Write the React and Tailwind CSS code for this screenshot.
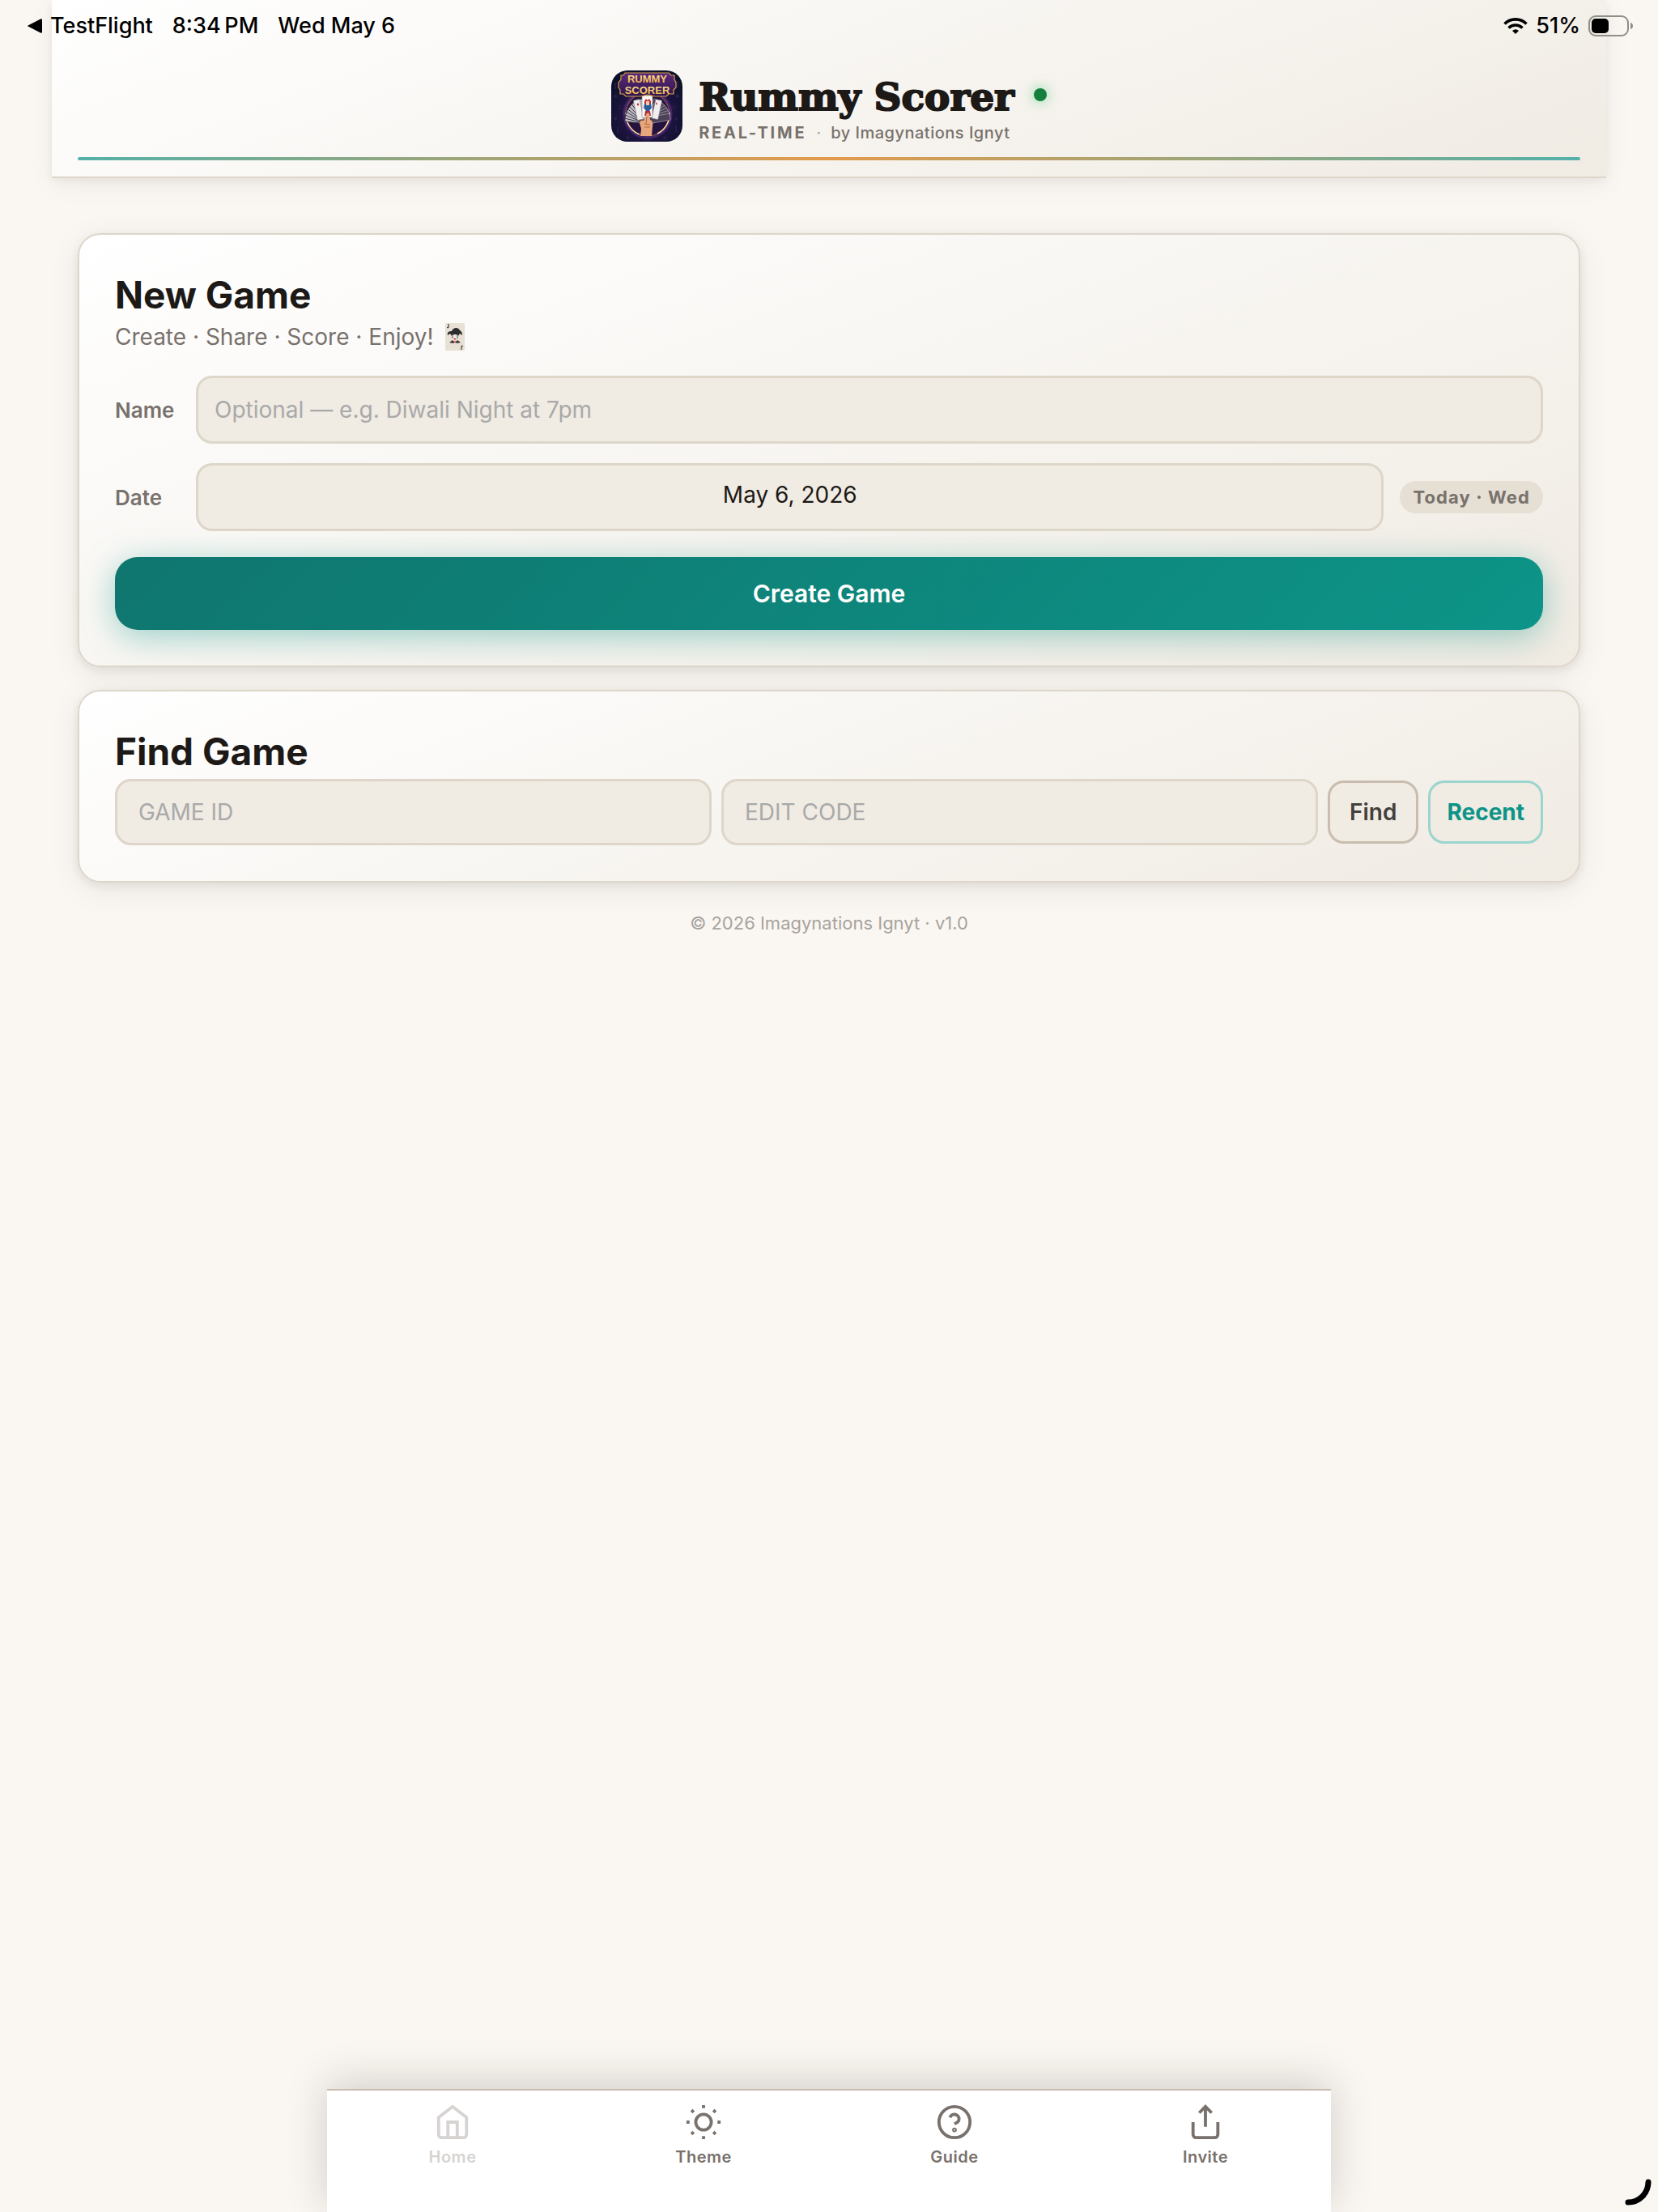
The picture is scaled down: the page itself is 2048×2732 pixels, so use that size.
import React, { useState } from "react";

const fieldClass =
    "min-w-0 rounded-[20px] border-3 border-[#ddd6c9] bg-[#f0ebe3] text-[28px] leading-8 text-[#1c1917] placeholder:text-[#a9a9a9] outline-none";

const cardClass =
    "rounded-[28px] border-2 border-[#ddd6c9] bg-[linear-gradient(160deg,#ffffff_0%,#f0ebe3_100%)] p-11 shadow-[0_4px_12px_rgba(28,25,23,0.08),0_8px_40px_rgba(28,25,23,0.07)]";

const cards = [-84, -76, -68, -60, -52, -44, -36, -28, -20];
const darkCards = [24, 32, 40, 48, 56, 64, 72, 80];

const AppLogo = () => (
    <svg viewBox="0 0 88 88" className="size-[88px] shrink-0 rounded-[20px]" role="img" aria-label="Rummy Scorer logo">
        <defs>
            <radialGradient id="logoBg" cx="50%" cy="62%" r="65%">
                <stop offset="0" stopColor="#4a2672" />
                <stop offset="0.55" stopColor="#1d1440" />
                <stop offset="1" stopColor="#0b1128" />
            </radialGradient>
            <linearGradient id="gold" x1="0" y1="0" x2="0" y2="1">
                <stop offset="0" stopColor="#fff0a0" />
                <stop offset="1" stopColor="#eaa93a" />
            </linearGradient>
            <linearGradient id="plate" x1="0" y1="0" x2="0" y2="1">
                <stop offset="0" stopColor="#5b2a78" />
                <stop offset="1" stopColor="#2d1450" />
            </linearGradient>
        </defs>
        <rect width="88" height="88" fill="url(#logoBg)" />
        <g fill="#2c2148" fontSize="8" fontFamily="Liberation Sans, sans-serif">
            <text x="3" y="34">♠</text>
            <text x="79" y="34">♣</text>
            <text x="8" y="48">20</text>
            <text x="72" y="48">30</text>
            <text x="3" y="62">♥</text>
            <text x="78" y="62">♦</text>
            <text x="18" y="86">♥</text>
            <text x="40" y="87">80</text>
            <text x="64" y="86">♥</text>
        </g>
        <path d="M5 15v8M82 13v8M8 70v8M80 68v8" stroke="#2a2148" strokeWidth="1.5" />
        <circle cx="45" cy="54" r="29" fill="none" stroke="#43256c" strokeWidth="3" />
        <circle cx="45" cy="54" r="27" fill="#24123f" stroke="#8f5a4f" strokeWidth="1.200" />
        <path d="M18 52a27 27 0 0 0 17 27M72 52a27 27 0 0 1-15 26" fill="none" stroke="#ffdfa0" strokeWidth="1.500" />
        {cards.map((angle) => (
            <rect key={angle} x="41" y="34" width="8" height="27" rx="1" fill="#c3bfc8" stroke="#2f2a38" strokeWidth="0.900" transform={`rotate(${angle} 45 62)`} />
        ))}
        {darkCards.map((angle) => (
            <rect key={angle} x="41" y="34" width="8" height="27" rx="1" fill="#4b4259" stroke="#a79ca9" strokeWidth="0.700" transform={`rotate(${angle} 45 62)`} />
        ))}
        <rect x="33" y="34" width="8" height="25" rx="1" fill="#f1eef0" stroke="#77717c" strokeWidth="0.600" transform="rotate(-12 45 63)" />
        <rect x="49" y="34" width="8" height="24" rx="1" fill="#f1eef0" stroke="#77717c" strokeWidth="0.600" transform="rotate(12 45 63)" />
        <rect x="38" y="31" width="13" height="27" rx="1" fill="#fdfbf7" stroke="#77717c" strokeWidth="0.600" />
        <path d="M41 38l2-3 2 2 2-2 2 3v3h-8z" fill="#c42e35" />
        <path d="M41 41h8l1 5-3 4h-4l-3-4z" fill="#2d5b9c" />
        <path d="M43 38h4v5h-4z" fill="#f1c8a2" />
        <path d="M42 50h6l1 6h-8z" fill="#ad3040" />
        <path d="M33 40l1.500 2-1.500 2-1.500-2zM56 39l1 2-1 2-1-2z" fill="#c42e35" />
        <path d="M36 81l1-9-2-7c0-3 3-4 5-3l3-7c1-3 3-3 4-1l1 7c3 1 4 4 3 8l-1 12z" fill="#e8a67c" />
        <path d="M44 57l-1 9M41 66l7 1M41 70h7" stroke="#a9623f" strokeWidth="0.900" fill="none" />
        <path
            d="M17 3h54l3 3h4v5l2 4v6l-3 3v5h-6l-3 3H54l-9-2-9 2H18l-3-3h-4v-5l-2-3v-6l3-4V6h3z"
            fill="url(#plate)"
            stroke="#d7a04a"
            strokeWidth="1.200"
        />
        <g fill="url(#gold)" fontFamily="Liberation Sans, sans-serif" fontWeight="700" fontSize="13" textAnchor="middle">
            <text x="44.500" y="14.500">RUMMY</text>
            <text x="44.500" y="29">SCORER</text>
        </g>
    </svg>
);

const JokerCard = () => (
    <svg viewBox="0 0 24 34" className="h-[34px] w-6" aria-hidden="true">
        <rect width="24" height="34" rx="1.500" fill="#e8dfd5" />
        <path d="M4 1v4q0 1-2 .5M20 33v-4q0-1 2-.5" fill="none" stroke="#44403c" strokeWidth="1.200" />
        <path d="M3 15c-1-4 2-5 5-5 2-5 8-5 10-1 2 1 3 3 3 6l-3-2-2 3-4-2-4 2-2-3z" fill="#2c2c2e" />
        <path d="M8 15l4-1 4 1v3l-2 3h-4l-2-3z" fill="#efe8e2" />
        <path d="M9 15v4M15 15v4" stroke="#57534e" strokeWidth="1" />
        <path d="M10 19h4l-2 2z" fill="#c0392b" />
        <path d="M5 24l4-3 3 3 3-3 4 3-4 1-3-1-3 1z" fill="#3a3a3c" />
        <path d="M10 22h4l-2 3z" fill="#dc6a5c" />
    </svg>
);

const navItems = [
    {
        label: "Home",
        disabled: true,
        icon: (
            <>
                <path d="M3 9l9-7 9 7v11a2 2 0 0 1-2 2H5a2 2 0 0 1-2-2z" />
                <path d="M9 22V12h6v10" />
            </>
        ),
    },
    {
        label: "Theme",
        icon: (
            <>
                <circle cx="12" cy="12" r="5" />
                <path d="M12 1v2M12 21v2M4.220 4.220l1.420 1.420M18.360 18.360l1.420 1.420M1 12h2M21 12h2M4.220 19.780l1.420-1.420M18.360 5.640l1.420-1.420" />
            </>
        ),
    },
    {
        label: "Guide",
        icon: (
            <>
                <circle cx="12" cy="12" r="10" />
                <path d="M9.090 9a3 3 0 0 1 5.830 1c0 2-3 3-3 3" />
                <circle cx="12" cy="17" r="0.500" />
            </>
        ),
    },
    {
        label: "Invite",
        icon: (
            <>
                <path d="M4 12v8a2 2 0 0 0 2 2h12a2 2 0 0 0 2-2v-8" />
                <path d="M16 6l-4-4-4 4M12 2v13" />
            </>
        ),
    },
];

const StatusBar = () => (
    <div className="absolute inset-x-0 top-0 flex h-16 items-center justify-between pr-[30px] pl-[34px] text-[27px] leading-8 font-medium text-black">
        <div className="flex items-center gap-6">
            <span className="flex items-center gap-2.5">
                <svg viewBox="0 0 18 18" className="size-[18px]" aria-hidden="true">
                    <path d="M1 8.200 16 .5q2-.8 2 1v15q0 1.800-2 1L1 9.800q-1.500-.8 0-1.600z" />
                </svg>
                TestFlight
            </span>
            <span>8:34{"\u2009"}PM</span>
            <span>Wed May 6</span>
        </div>
        <div className="flex items-center gap-2.5">
            <svg viewBox="0 0 30 20" className="h-5 w-[30px]" fill="none" stroke="black" strokeWidth="3.600" aria-hidden="true">
                <path d="M1.500 7.500a19 19 0 0 1 27 0" />
                <path d="M6.500 12.500a12 12 0 0 1 17 0" />
                <path d="M15 20l-4-4q4-3.500 8 0z" fill="black" stroke="none" />
            </svg>
            <span>51%</span>
            <svg viewBox="0 0 56 26" className="h-[26px] w-14" aria-hidden="true">
                <rect x="1" y="1" width="48" height="24" rx="8" fill="none" stroke="#8f8e89" strokeWidth="2" />
                <rect x="4" y="4" width="21" height="18" rx="5" />
                <path d="M52 9c4 1 4 7 0 8z" fill="#8f8e89" />
            </svg>
        </div>
    </div>
);

const App = () => {
    const [name, setName] = useState("");
    const [date, setDate] = useState("May 6, 2026");

    return (
        <div className="relative flex min-h-screen w-full flex-col overflow-hidden bg-[#faf7f2] px-16 font-['Inter',sans-serif] text-[#1c1917]">
            {/* HEADER */}
            <header className="border-b-2 border-[#ddd6c9] bg-[linear-gradient(160deg,#ffffff_0%,#f0ebe3_100%)] px-8 pt-[84px] pb-5 shadow-[0_4px_12px_rgba(28,25,23,0.05),0_8px_32px_rgba(28,25,23,0.05)]">
                <div className="flex items-center justify-center gap-5">
                    <AppLogo />
                    <div className="flex flex-col">
                        <div className="flex items-center gap-6">
                            <h1 className="pt-1.5 font-['DejaVu_Serif',serif] text-[47px] leading-[60px] font-black [-webkit-text-stroke:2px_#1c1917]">
                                Rummy Scorer
                            </h1>
                            <span className="size-4 rounded-full bg-[#15803d] shadow-[0_0_16px_rgba(34,197,94,0.6)]"></span>
                        </div>
                        <p className="flex items-center gap-3 text-xl leading-7 text-[#78716c]">
                            <span className="font-bold tracking-[0.14em]">REAL-TIME</span>
                            <span className="text-[#a8a29e]">·</span>
                            <span className="font-medium tracking-wide">by Imagynations Ignyt</span>
                        </p>
                    </div>
                </div>
                <div className="mt-4 h-1 rounded-full bg-[linear-gradient(90deg,#55b1a9,#e39a4b,#55b1a9)]"></div>
            </header>

            <StatusBar />

            <main className="flex flex-col gap-7 px-8 pt-[68px]">
                {/* NEW GAME */}
                <section className={cardClass}>
                    <h2 className="text-[46px] leading-[60px] font-bold">New Game</h2>
                    <p className="mb-[26px] flex items-center gap-3.5 text-[28px] leading-[44px] text-[#78716c]">
                        Create · Share · Score · Enjoy! <JokerCard />
                    </p>
                    <div className="grid grid-cols-[80px_1fr] items-center gap-x-5 gap-y-6">
                        <label htmlFor="name" className="text-[26px] font-semibold text-[#78716c]">
                            Name
                        </label>
                        <input
                            id="name"
                            value={name}
                            onChange={(e) => setName(e.target.value)}
                            placeholder="Optional — e.g. Diwali Night at 7pm"
                            className={`${fieldClass} h-[84px] px-5`}
                        />
                        <label htmlFor="date" className="text-[26px] font-semibold text-[#78716c]">
                            Date
                        </label>
                        <div className="flex items-center gap-5">
                            <input
                                id="date"
                                value={date}
                                onChange={(e) => setDate(e.target.value)}
                                className={`${fieldClass} h-[84px] flex-1 px-5 pb-1.5 text-center`}
                            />
                            <span className="rounded-full bg-[#e5dfd4] px-4 text-[22px] leading-10 font-bold tracking-wider text-[#78716c]">
                                Today · Wed
                            </span>
                        </div>
                    </div>
                    <button className="mt-8 block h-[90px] w-full rounded-[28px] bg-[linear-gradient(135deg,#0f766e,#0d9488)] text-[30px] font-semibold text-white shadow-[0_8px_40px_rgba(13,148,136,0.4)]">
                        Create Game
                    </button>
                </section>

                {/* FIND GAME */}
                <section className={cardClass}>
                    <h2 className="mb-1 text-[46px] leading-[60px] font-bold">Find Game</h2>
                    <div className="flex items-center gap-3">
                        <input aria-label="Game ID" placeholder="GAME ID" className={`${fieldClass} h-[82px] flex-1 px-[26px]`} />
                        <input aria-label="Edit code" placeholder="EDIT CODE" className={`${fieldClass} h-[82px] flex-1 px-[26px]`} />
                        <button className="h-[78px] rounded-[20px] border-3 border-[#c8bdae] bg-[#f0ebe3] px-6 text-[28px] font-semibold text-[#44403c]">
                            Find
                        </button>
                        <button className="h-[78px] rounded-[20px] border-3 border-[#9ad5ce] bg-[#f0ebe3] px-5 text-[28px] font-bold text-[#0d9488]">
                            Recent
                        </button>
                    </div>
                </section>
            </main>

            <footer className="pt-9 text-center text-[22px] leading-7 text-[#a8a29e]">© 2026 Imagynations Ignyt · v1.0</footer>

            {/* BOTTOM NAV */}
            <nav className="mx-auto mt-auto flex w-full max-w-[1240px] border-t-2 border-[#c8bdae] bg-white pt-4 pb-[54px] shadow-[0_-8px_48px_rgba(28,25,23,0.18)]">
                {navItems.map((item) => (
                    <button
                        key={item.label}
                        disabled={item.disabled}
                        className="flex flex-1 flex-col items-center gap-1.5 text-xl leading-7 font-semibold tracking-wide text-[#78716c] disabled:text-[#d6d3d1]"
                    >
                        <svg viewBox="0 0 24 24" className="size-[46px]" fill="none" stroke="currentColor" strokeWidth="2">
                            {item.icon}
                        </svg>
                        {item.label}
                    </button>
                ))}
            </nav>

            <svg viewBox="0 0 36 36" className="absolute right-2 bottom-2 size-9" fill="none" aria-hidden="true">
                <path d="M32 7a25 25 0 0 1-25 25" stroke="black" strokeWidth="7" strokeLinecap="round" />
            </svg>
        </div>
    );
};

export default App;
